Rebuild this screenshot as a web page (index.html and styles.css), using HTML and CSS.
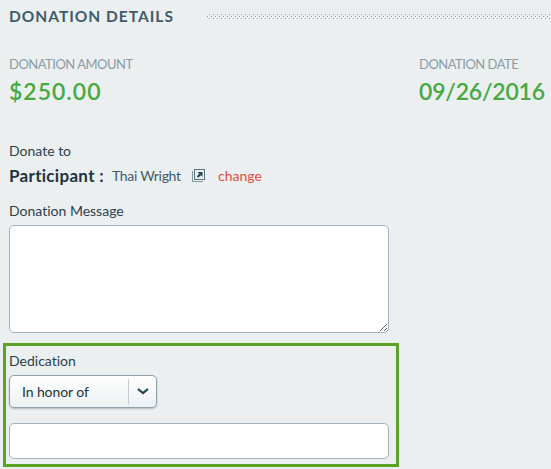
FILE: index.html
```html
<!DOCTYPE html>
<html lang="en">
<head>
  <meta charset="UTF-8">
  <title>Donation Details</title>
  <meta name="viewport" content="width=device-width, initial-scale=1.0">
  <link rel="stylesheet" href="styles.css">
</head>
<body>

  <header class="section-header">
    <h2>DONATION DETAILS</h2>
    <div class="dots"></div>
  </header>

  <div class="summary">
    <div class="amount">
      <div class="caption">DONATION AMOUNT</div>
      <div class="value">$250.00</div>
    </div>
    <div class="date">
      <div class="caption">DONATION DATE</div>
      <div class="value">09/26/2016</div>
    </div>
  </div>

  <div class="label">Donate to</div>
  <div class="participant">
    <strong>Participant :</strong>
    <span class="name">Thai Wright</span>
    <svg class="popup-icon" width="13" height="13" viewBox="0 0 13 13" fill="none">
      <path d="M.5 2v10.500h10.500" stroke="#84969d"/>
      <rect x="2.500" y=".5" width="10" height="10" stroke="#5c7480"/>
      <path d="M5.500 3h5v5L8.800 6.300 6.300 8.800 4.800 7.300 7.200 4.700z" fill="#2d4654"/>
    </svg>
    <a class="change">change</a>
  </div>

  <label class="label" for="message">Donation Message</label>
  <textarea id="message" class="field message"></textarea>

  <div class="dedication">
    <div class="label">Dedication</div>
    <button type="button" class="select">
      <span class="select-text">In honor of</span>
      <span class="select-arrow">
        <svg width="12" height="8" viewBox="0 0 12 8" fill="none">
          <path d="M1 2l5 4 5-4" stroke="#24404f" stroke-width="2.200"/>
        </svg>
      </span>
    </button>
    <input type="text" class="field dedication-name">
  </div>

</body>
</html>
```

FILE: styles.css
```css
* {
  box-sizing: border-box;
}
body {
  margin: 0;
  height: 469px;
  overflow: hidden;
  background-color: #ebeff0;
  color: #2b414d;
  font-family: Lato, "Open Sans", sans-serif;
  font-size: 14px;
  font-variant-ligatures: none;
}
.section-header {
  display: flex;
  padding: 6px 0 0 9px;
  height: 55px;
}
h2 {
  width: 198px;
  margin: 0;
  color: #3f5b69;
  font-size: 15.5px;
  font-weight: 700;
  line-height: 20px;
  letter-spacing: 1px;
  white-space: nowrap;
}
.dots {
  flex: 1;
  height: 5px;
  margin-top: 8px;
  background-image:
    conic-gradient(at 1px 1px, transparent 75%, #8f9699 0),
    conic-gradient(at 1px 1px, transparent 75%, #8f9699 0);
  background-position: 0 2px, 2px 0;
  background-size: 4px 4px;
}
.summary {
  display: flex;
  height: 87px;
  padding-left: 9px;
}
.amount {
  width: 410px;
}
.caption {
  color: #8b9ca5;
  font-size: 13px;
  line-height: 19px;
  letter-spacing: -0.5px;
  white-space: nowrap;
}
.value {
  color: #46a942;
  font-size: 23px;
  font-weight: 600;
  line-height: 34px;
  letter-spacing: -0.2px;
  white-space: nowrap;
}
.amount .value {
  letter-spacing: 1px;
}
.label {
  display: block;
  height: 18px;
  padding-left: 9px;
  font-size: 14px;
  line-height: 18px;
}
.participant {
  display: flex;
  align-items: center;
  height: 30px;
  margin-bottom: 12px;
  padding-left: 9px;
}
.participant strong {
  width: 103px;
  color: #20343f;
  font-size: 17px;
  letter-spacing: 0.3px;
}
.name {
  width: 80px;
  color: #3f5b69;
  letter-spacing: -0.3px;
  white-space: nowrap;
}
.popup-icon {
  margin-right: 13px;
}
.change {
  color: #e74c3c;
}
.field {
  display: block;
  width: 380px;
  margin: 0;
  border: 1px solid #a3b2ba;
  border-radius: 5px;
  background: #fff;
  outline: none;
}
.message {
  height: 108px;
  margin: 5px 0 10px 9px;
}
.dedication {
  width: 396px;
  height: 124px;
  margin-left: 3px;
  padding: 6px 3px 0;
  border: 3px solid #5ba225;
}
.dedication .label {
  padding-left: 0;
}
.select {
  display: flex;
  align-items: center;
  width: 148px;
  height: 33px;
  margin: 5px 0 15px;
  padding: 0 0 1px 12px;
  border: 1px solid #8ea0aa;
  border-radius: 5px;
  background: linear-gradient(#fff, #edf0f3);
  box-shadow: 0 1px 2px rgba(60, 80, 90, 0.35);
  color: #20343f;
  font: 14px Lato, "Open Sans", sans-serif;
  letter-spacing: -0.1px;
}
.select-text {
  flex: 1;
  text-align: left;
}
.select-arrow {
  display: flex;
  align-items: center;
  justify-content: center;
  width: 28px;
  height: 25px;
  border-left: 1px solid #c3ccd1;
}
.dedication-name {
  height: 36px;
}
```
